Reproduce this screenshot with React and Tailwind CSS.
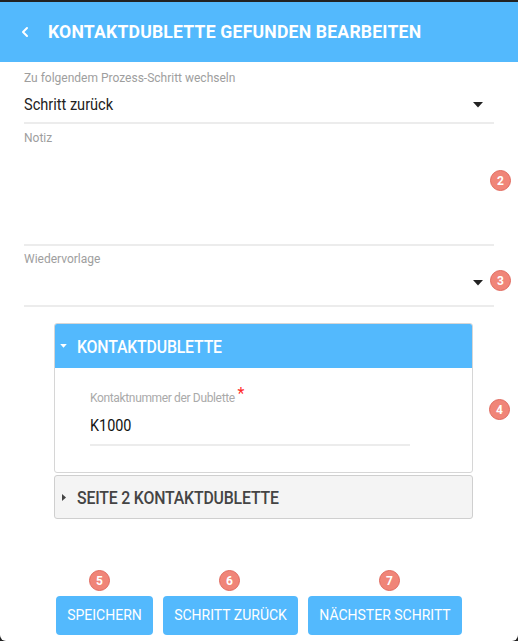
import { ChevronLeft } from 'lucide-react';

const font = { fontFamily: 'Roboto, "Liberation Sans", sans-serif' };

function Badge({ n }) {
  return (
    <span className="flex h-[21px] w-[21px] items-center justify-center rounded-full border border-[#e06a5f] bg-[#f08578] text-[12px] font-bold leading-none text-white">
      {n}
    </span>
  );
}

function Caret({ className = '' }) {
  return (
    <svg width="10" height="6" viewBox="0 0 10 6" className={className}>
      <path d="M0 0h10L5 5.5z" fill="currentColor" />
    </svg>
  );
}

function Field({ label, children, height, top = 9 }) {
  return (
    <div className="mx-6 border-b-2 border-[#ececec]" style={{ height }}>
      <div className="text-[12px] leading-[14px] text-[#9e9e9e]" style={{ paddingTop: top }}>{label}</div>
      {children}
    </div>
  );
}

export default function App() {
  return (
    <div className="min-h-screen bg-[#222] pt-[2px]" style={font}>
      <div className="h-[639px] overflow-hidden rounded-b-[6px] bg-white">
        <header className="flex h-[60px] items-center bg-[#53b9fd] text-white">
          <ChevronLeft className="ml-[17px] h-[16px] w-[16px]" strokeWidth={3} />
          <h1 className="ml-[15px] text-[17.6px] font-bold tracking-[0.2px]">KONTAKTDUBLETTE GEFUNDEN BEARBEITEN</h1>
        </header>

        <Field label="Zu folgendem Prozess-Schritt wechseln" height={62}>
          <div className="mt-[8px] flex items-center justify-between pr-[11px]">
            <span className="inline-block origin-left scale-x-[0.91] text-[16px] text-[#222]">Schritt zurück</span>
            <Caret className="text-[#222]" />
          </div>
        </Field>

        <div className="relative">
          <Field label="Notiz" height={122} top={7} />
          <div className="absolute right-[7px] top-[46px]"><Badge n="2" /></div>
        </div>

        <div className="relative">
          <Field label="Wiedervorlage" height={61} top={6}>
            <div className="mt-[14px] flex justify-end pr-[11px]">
              <Caret className="text-[#222]" />
            </div>
          </Field>
          <div className="absolute right-[7px] top-[24px]"><Badge n="3" /></div>
        </div>

        <div className="relative mt-[16px] ml-[54px] mr-[45px]">
          <div className="overflow-hidden rounded-[3px] border border-[#d6d6d6]">
            <div className="flex h-[44px] items-center bg-[#53b9fd] text-white">
              <Caret className="ml-[5px] h-[4px] w-[7px] text-white" />
              <span className="ml-[10px] inline-block origin-left scale-x-[0.88] text-[18px] font-medium tracking-[-0.2px]">KONTAKTDUBLETTE</span>
            </div>
            <div className="h-[104px] pl-[35px] pr-[62px] pt-[22px]">
              <div className="text-[12px] leading-[14px] tracking-[-0.35px] text-[#aaa]">
                Kontaktnummer der Dublette <span className="relative top-[-3px] text-[16px] text-[#ff2a2a]">*</span>
              </div>
              <div className="mt-[9px] border-b-2 border-[#ececec] pb-[6px]">
                <span className="inline-block origin-left scale-x-[0.9] text-[16px] text-[#111]">K1000</span>
              </div>
            </div>
          </div>
          <div className="absolute right-[-37px] top-[76px]"><Badge n="4" /></div>
          <div className="mt-[2px] flex h-[44px] items-center rounded-[3px] border border-[#cfcfcf] bg-[#f4f4f4] text-[#444]">
            <svg width="4" height="7" viewBox="0 0 4 7" className="ml-[7px]"><path d="M0 0l4 3.5L0 7z" fill="currentColor" /></svg>
            <span className="ml-[11px] inline-block origin-left scale-x-[0.88] text-[18px] font-medium tracking-[-0.2px]">SEITE 2 KONTAKTDUBLETTE</span>
          </div>
        </div>

        <div className="mt-[50px] flex gap-[10px] pl-[56px]">
          {[
            ['5', 'SPEICHERN', 'w-[97px]', 'pl-[33px]'],
            ['6', 'SCHRITT ZURÜCK', 'w-[135px]', 'pl-[56px]'],
            ['7', 'NÄCHSTER SCHRITT', 'w-[154px]', 'pl-[71px]'],
          ].map(([n, label, w, pad]) => (
            <div key={n} className={`flex flex-col ${w}`}>
              <div className={`pt-[1px] ${pad}`}><Badge n={n} /></div>
              <button className="mt-[5px] h-[39px] w-full rounded-[4px] bg-[#53b9fd] text-[14px] text-white">{label}</button>
            </div>
          ))}
        </div>
      </div>
    </div>
  );
}
